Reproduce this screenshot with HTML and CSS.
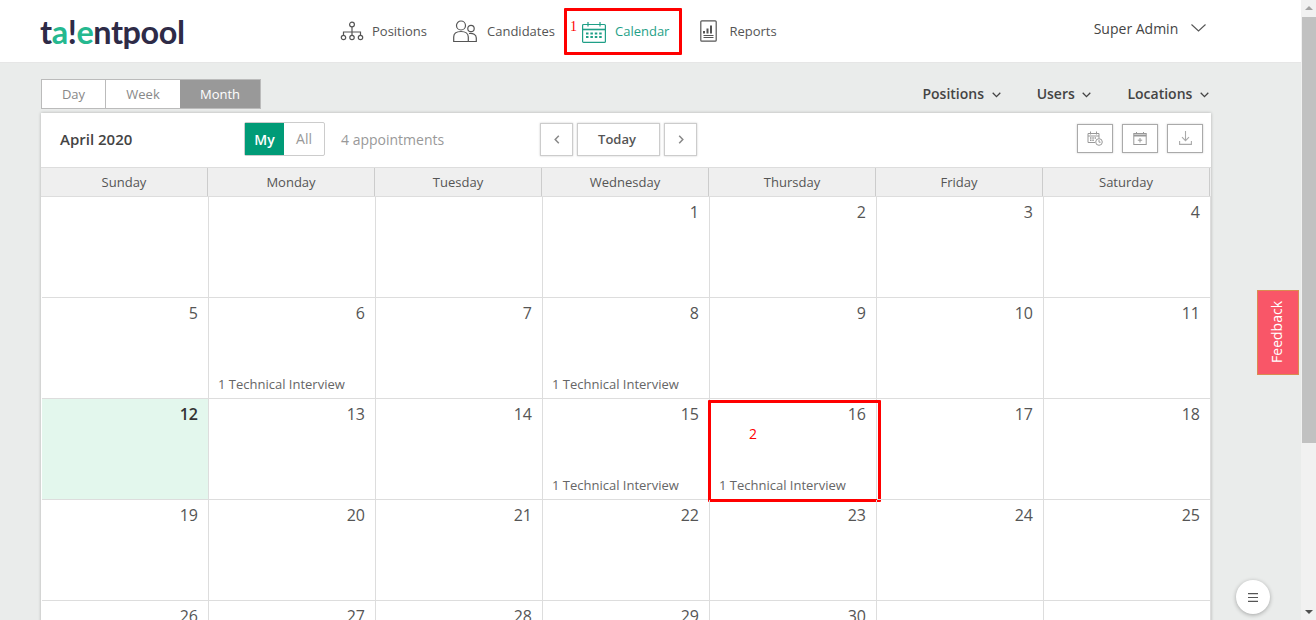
FILE: index.html
```html
<!DOCTYPE html>
<html>
	<head>
		<meta charset="UTF-8">
		<title>Calendar</title>
		<link rel="stylesheet" href="styles.css">
	</head>
	<body>
		<div class="page">
			<div class="header">
				<div class="logo">t<span class="green">a</span>!<span class="green">e</span>ntpool</div>
				<ul class="nav">
					<li class="nav-positions">
						<svg width="24" height="20" viewBox="0 0 24 20" fill="none" stroke="#555" stroke-width="1.2">
							<circle cx="12" cy="3.5" r="2.4"/>
							<path d="M12 6v5M3.5 14.5V11h17v3.500M12 11v3.500"/>
							<circle cx="3.500" cy="16.500" r="2.200"/>
							<circle cx="12" cy="16.500" r="2.200"/>
							<circle cx="20.500" cy="16.500" r="2.200"/>
						</svg>
						<span>Positions</span>
					</li>
					<li class="nav-candidates">
						<svg width="24" height="23" viewBox="0 0 24 23" fill="none" stroke="#555" stroke-width="1.2">
							<circle cx="8" cy="5.500" r="4.500"/>
							<circle cx="18" cy="8.500" r="3.200"/>
							<path d="M.7 21.500v-4.500c0-3.500 3-5.500 7.300-5.500s7.300 2 7.300 5.500v4.500z"/>
							<path d="M16 13.500c4-.5 7.300 1 7.300 4.500v3.500h-8"/>
						</svg>
						<span>Candidates</span>
					</li>
					<li class="nav-calendar">
						<svg class="cal-icon" width="24" height="21" viewBox="0 0 24 21" fill="none" stroke="#1f9f87" stroke-width="1.2">
							<rect x=".6" y="2.500" width="22.800" height="17.900" rx="1"/>
							<path d="M.6 7.500h22.800" stroke-width="1.600"/>
							<path d="M6 0v4.500M18 0v4.500"/>
							<path d="M4 11.500h16M4 15h16" stroke-width="2" stroke-dasharray="2.500 1.900"/>
						</svg>
						<span>Calendar</span>
						<div class="mark-nav">1</div>
					</li>
					<li class="nav-reports">
						<svg width="17" height="22" viewBox="0 0 17 22" fill="none" stroke="#555" stroke-width="1.200">
							<rect x=".8" y=".8" width="15.400" height="20.400" rx="1"/>
							<path d="M4 11v2.500M7.500 8.500v5M11 5.500v8" stroke-width="2"/>
							<path d="M3.500 15.500h10M3.500 17.500h10"/>
						</svg>
						<span>Reports</span>
					</li>
				</ul>
				<div class="user">
					<span>Super Admin</span>
					<svg width="15" height="8" viewBox="0 0 15 8" fill="none" stroke="#555" stroke-width="1.100"><path d="M.5.500l7 6.500 7-6.500"/></svg>
				</div>
			</div>
			<div class="content">
				<div class="toolbar">
					<div class="tabs">
						<div class="tab tab-day">Day</div>
						<div class="tab tab-week">Week</div>
						<div class="tab tab-month">Month</div>
					</div>
					<div class="filters">
						<div class="filter">Positions <svg width="9" height="6" viewBox="0 0 9 6" fill="none" stroke="#444" stroke-width="1.300"><path d="M.7.800l3.800 3.800L8.300.800"/></svg></div>
						<div class="filter">Users <svg width="9" height="6" viewBox="0 0 9 6" fill="none" stroke="#444" stroke-width="1.300"><path d="M.7.800l3.800 3.800L8.300.800"/></svg></div>
						<div class="filter">Locations <svg width="9" height="6" viewBox="0 0 9 6" fill="none" stroke="#444" stroke-width="1.300"><path d="M.7.800l3.800 3.800L8.300.800"/></svg></div>
					</div>
				</div>
				<div class="panel">
					<div class="panel-head">
						<div class="month-title">April 2020</div>
						<div class="switch">
							<div class="switch-my">My</div>
							<div class="switch-all">All</div>
						</div>
						<div class="count">4 appointments</div>
						<div class="pager">
							<div class="btn btn-arrow">
								<svg width="6" height="9" viewBox="0 0 6 9" fill="none" stroke="#888" stroke-width="1.500"><path d="M4.800.800L1.200 4.500l3.600 3.700"/></svg>
							</div>
							<div class="btn btn-today">Today</div>
							<div class="btn btn-arrow">
								<svg width="6" height="9" viewBox="0 0 6 9" fill="none" stroke="#888" stroke-width="1.500"><path d="M1.200.800l3.600 3.700-3.600 3.700"/></svg>
							</div>
						</div>
						<div class="actions">
							<div class="btn-icon">
								<svg width="16" height="15" viewBox="0 0 16 15" fill="none" stroke="#999" stroke-width="1">
									<path d="M8 11.500H1V2.500h11v5"/>
									<path d="M3.500.500v3M9.500.500v3M1 5h11"/>
									<path d="M3 7h6M3 9.300h4" stroke-width="1.500" stroke-dasharray="1.500 .8"/>
									<circle cx="12" cy="11" r="3.300" fill="#fff"/>
									<path d="M12 9v2.200h1.600"/>
								</svg>
							</div>
							<div class="btn-icon">
								<svg width="14" height="13" viewBox="0 0 14 13" fill="none" stroke="#999" stroke-width="1">
									<rect x=".8" y="1.500" width="12.400" height="11"/>
									<path d="M.8 3.500h12.400" stroke-width="2"/>
									<path d="M3.500 0v2M10.500 0v2M7 6v4.500M4.800 8.200h4.400"/>
								</svg>
							</div>
							<div class="btn-icon">
								<svg width="13" height="14" viewBox="0 0 13 14" fill="none" stroke="#aaa" stroke-width="1.100">
									<path d="M6.500 0v9.500M3 6.200l3.500 3.500L10 6.200"/>
									<path d="M.6 10v3.400h11.800V10"/>
								</svg>
							</div>
						</div>
					</div>
					<div class="week-head">
						<div>Sunday</div>
						<div>Monday</div>
						<div>Tuesday</div>
						<div>Wednesday</div>
						<div>Thursday</div>
						<div>Friday</div>
						<div>Saturday</div>
					</div>
					<div class="days">
						<div class="day"></div>
						<div class="day"></div>
						<div class="day"></div>
						<div class="day"><div class="num">1</div></div>
						<div class="day"><div class="num">2</div></div>
						<div class="day"><div class="num">3</div></div>
						<div class="day"><div class="num">4</div></div>

						<div class="day"><div class="num">5</div></div>
						<div class="day"><div class="num">6</div><div class="event">1 Technical Interview</div></div>
						<div class="day"><div class="num">7</div></div>
						<div class="day"><div class="num">8</div><div class="event">1 Technical Interview</div></div>
						<div class="day"><div class="num">9</div></div>
						<div class="day"><div class="num">10</div></div>
						<div class="day"><div class="num">11</div></div>

						<div class="day today"><div class="num">12</div></div>
						<div class="day"><div class="num">13</div></div>
						<div class="day"><div class="num">14</div></div>
						<div class="day"><div class="num">15</div><div class="event">1 Technical Interview</div></div>
						<div class="day day-marked">
							<div class="num">16</div>
							<div class="event">1 Technical Interview</div>
							<div class="mark-day">2</div>
						</div>
						<div class="day"><div class="num">17</div></div>
						<div class="day"><div class="num">18</div></div>

						<div class="day"><div class="num">19</div></div>
						<div class="day"><div class="num">20</div></div>
						<div class="day"><div class="num">21</div></div>
						<div class="day"><div class="num">22</div></div>
						<div class="day"><div class="num">23</div></div>
						<div class="day"><div class="num">24</div></div>
						<div class="day"><div class="num">25</div></div>

						<div class="day"><div class="num">26</div></div>
						<div class="day"><div class="num">27</div></div>
						<div class="day"><div class="num">28</div></div>
						<div class="day"><div class="num">29</div></div>
						<div class="day"><div class="num">30</div></div>
						<div class="day"></div>
						<div class="day"></div>
					</div>
				</div>
			</div>
			<div class="feedback"><span>Feedback</span></div>
			<div class="menu-btn">
				<svg width="10" height="9" viewBox="0 0 10 9" fill="none" stroke="#555" stroke-width="1.200"><path d="M0 .7h10M0 4.500h10M0 8.300h10"/></svg>
			</div>
		</div>
		<div class="scrollbar">
			<div class="arrow-up"></div>
			<div class="thumb"></div>
			<div class="arrow-down"></div>
		</div>
	</body>
</html>
```

FILE: styles.css
```css
*,*::after{
	margin: 0;
	padding: 0;
	list-style: none;
	box-sizing: border-box;
}
html{
	height: 100%;
}
body{
	height: 620px;
	overflow: hidden;
	display: flex;
	background-color: #eaeceb;
	font-family: "Open Sans", "Liberation Sans", sans-serif;
	font-size: 14px;
	color: #555;
}
.page{
	position: relative;
	width: 1301px;
	height: 620px;
	overflow: hidden;
}
/*顶部导航*/
.header{
	display: flex;
	align-items: center;
	height: 63px;
	padding-left: 40px;
	background-color: #fff;
	border-bottom: 1px solid #e6e6e6;
}
.logo{
	width: 300px;
	font-family: Lato, sans-serif;
	font-size: 32.4px;
	font-weight: 700;
	letter-spacing: -0.4px;
	color: #2e2b47;
}
.logo .green{
	color: #25b88f;
}
.nav{
	display: flex;
	align-items: center;
	height: 100%;
	font-size: 13px;
}
.nav li{
	position: relative;
	display: flex;
	align-items: center;
}
.nav-positions span{
	margin-left: 8px;
}
.nav-candidates{
	margin-left: 26px;
}
.nav-candidates span{
	margin-left: 10px;
}
.nav-calendar{
	margin-left: 27px;
	color: #1f9f87;
}
.nav-calendar span{
	margin-left: 9px;
}
.cal-icon{
	margin-top: 2px;
}
.nav-reports{
	margin-left: 31px;
}
.nav-reports span{
	margin-left: 12px;
}
.mark-nav{
	position: absolute;
	left: -18px;
	top: -12px;
	width: 118px;
	height: 47px;
	padding-left: 3px;
	border: 3px solid #f00;
	border-radius: 1px;
	color: #f00;
	font-family: "Liberation Serif", serif;
	font-size: 14px;
	line-height: 32px;
}
.user{
	display: flex;
	align-items: center;
	gap: 13px;
	margin-left: 317px;
	padding-bottom: 6px;
	color: #444;
}
/*工具栏*/
.content{
	padding: 16px 0 0 41px;
}
.toolbar{
	display: flex;
	justify-content: space-between;
	width: 1170px;
	height: 34px;
}
.tabs{
	display: flex;
	height: 30px;
	border: 1px solid #bbb;
	font-size: 13px;
	line-height: 28px;
	text-align: center;
	color: #888;
	background-color: #fff;
}
.tab-day{
	width: 64px;
	border-right: 1px solid #bbb;
}
.tab-week{
	width: 74px;
}
.tab-month{
	width: 80px;
	background-color: #999;
	color: #fff;
}
.filters{
	display: flex;
	gap: 36px;
	padding-right: 2px;
	color: #444;
	font-weight: 600;
	line-height: 30px;
}
.filter svg{
	margin-left: 4px;
	vertical-align: 1px;
}
/*日历*/
.panel{
	width: 1170px;
	background-color: #fff;
	box-shadow: 0 0 3px rgba(0,0,0,.25);
}
.panel-head{
	display: flex;
	align-items: center;
	height: 54px;
	padding: 0 0 2px 19px;
}
.month-title{
	width: 184px;
	color: #444;
	font-size: 15px;
	font-weight: 600;
}
.switch{
	display: flex;
	height: 34px;
	width: 81px;
	border: 1px solid #ccc;
	border-radius: 2px;
	line-height: 32px;
	text-align: center;
}
.switch-my{
	width: 39px;
	background-color: #009b77;
	color: #fff;
	font-weight: 600;
	line-height: 34px;
}
.switch-all{
	flex: 1;
	color: #999;
}
.count{
	width: 199px;
	margin-left: 16px;
	color: #999;
}
.pager{
	display: flex;
	gap: 4px;
}
.btn{
	display: flex;
	align-items: center;
	justify-content: center;
	height: 33px;
	border: 1px solid #ccc;
	box-shadow: 0 0 2px rgba(0,0,0,.2);
}
.btn-arrow{
	width: 33px;
}
.btn-today{
	width: 83px;
	padding-right: 3px;
	color: #555;
	font-size: 13px;
	font-weight: 600;
}
.actions{
	display: flex;
	gap: 9px;
	margin: 0 0 2px 380px;
}
.btn-icon{
	display: flex;
	align-items: center;
	justify-content: center;
	width: 36px;
	height: 29px;
	border: 1px solid #aaa;
	box-shadow: 0 0 2px rgba(0,0,0,.2);
}
.week-head{
	display: grid;
	grid-template-columns: repeat(7, 167px);
	height: 30px;
	background-color: #efefef;
	border-top: 1px solid #ddd;
	border-bottom: 1px solid #ddd;
	font-size: 13px;
	line-height: 28px;
	text-align: center;
}
.week-head div{
	border-right: 1px solid #ccc;
}
.days{
	display: grid;
	grid-template-columns: repeat(7, 167px);
	grid-auto-rows: 101px;
	padding-left: 1px;
}
.day{
	position: relative;
	display: flex;
	flex-direction: column;
	padding: 3px 10px 4px 9px;
	border-right: 1px solid #ddd;
	border-bottom: 1px solid #ddd;
}
.num{
	font-size: 16px;
	line-height: 24px;
	text-align: right;
}
.event{
	margin-top: auto;
	font-size: 13px;
	line-height: 20px;
	color: #666;
}
.today{
	background-color: #e3f7ed;
}
.today .num{
	color: #333;
	font-weight: 600;
}
/*红框标注*/
.day-marked::after{
	content: "";
	position: absolute;
	left: -2px;
	top: 1px;
	width: 173px;
	height: 102px;
	border: 3px solid #f00;
	border-radius: 1px;
}
.mark-day{
	position: absolute;
	left: 39px;
	top: 25px;
	color: #f00;
	font-size: 14px;
	line-height: 20px;
}
/*反馈按钮*/
.feedback{
	position: absolute;
	left: 1257px;
	top: 290px;
	display: flex;
	align-items: center;
	justify-content: center;
	width: 42px;
	height: 85px;
	padding: 0 3px 2px 0;
	background-color: #f95668;
	border: 1px solid #d98c50;
	color: #fff;
}
.feedback span{
	writing-mode: vertical-rl;
	transform: rotate(180deg);
}
.menu-btn{
	position: absolute;
	left: 1236px;
	top: 580px;
	display: flex;
	align-items: center;
	justify-content: center;
	width: 34px;
	height: 34px;
	background-color: #fff;
	border-radius: 50%;
	box-shadow: 0 1px 4px rgba(0,0,0,.3);
}
/*滚动条*/
.scrollbar{
	position: relative;
	width: 15px;
	height: 620px;
	background-color: #f1f1f1;
}
.thumb{
	position: absolute;
	left: 1px;
	top: 17px;
	width: 14px;
	height: 426px;
	background-color: #c1c1c1;
}
.arrow-up,.arrow-down{
	position: absolute;
	left: 4px;
	width: 0;
	height: 0;
	border-left: 4px solid transparent;
	border-right: 4px solid transparent;
}
.arrow-up{
	top: 6px;
	border-bottom: 4px solid #a3a3a3;
}
.arrow-down{
	bottom: 6px;
	border-top: 4px solid #505050;
}
```
